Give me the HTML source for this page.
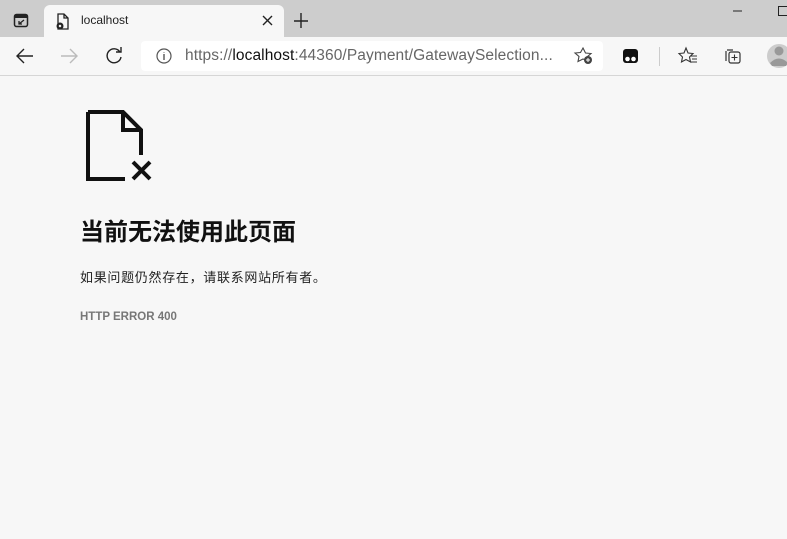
<!DOCTYPE html>
<html><head><meta charset="utf-8"><style>
*{margin:0;padding:0;box-sizing:border-box}
body{width:787px;height:539px;overflow:hidden;background:#f7f7f7;font-family:"Liberation Sans","Noto Sans CJK SC",sans-serif;position:relative}
.abs{position:absolute}
</style></head><body>
<div class="abs" style="left:0;top:0;width:787px;height:37px;background:#cdcdcd"></div>
<div class="abs" style="left:44px;top:5px;width:240px;height:33px;background:#f7f7f7;border-radius:6px 6px 0 0"></div>
<svg class="abs" style="left:0;top:0" width="787" height="76">
 <rect x="14.5" y="14.5" width="13" height="12" rx="2" fill="none" stroke="#222" stroke-width="1.5"/>
 <rect x="15" y="15" width="12" height="3" fill="#222"/>
 <path d="M24 20 L19 24 M19 21 V24 H22" stroke="#222" stroke-width="1.3" fill="none"/>
 <path d="M58 14 H64 L68 18 V29 H58 Z M64 14 V18 H68" stroke="#222" stroke-width="1.3" fill="none"/>
 <circle cx="60" cy="26" r="3.5" fill="#222"/>
 <path d="M59 25 L61 27 M61 25 L59 27" stroke="#fff" stroke-width="1"/>
 <path d="M263 16 L272 25 M272 16 L263 25" stroke="#222" stroke-width="1.4"/>
 <path d="M301 13 V28 M294 21 H308" stroke="#222" stroke-width="1.4"/>
 <path d="M733 11 H742" stroke="#222" stroke-width="1"/>
 <rect x="778.5" y="6.5" width="9" height="9" fill="none" stroke="#222"/>
 <path d="M33 56 H17 M24 49 L17 56 L24 63" stroke="#222" stroke-width="1.4" fill="none"/>
 <path d="M61 56 H77 M70 49 L77 56 L70 63" stroke="#bbb" stroke-width="1.4" fill="none"/>
 <path d="M120 52 A7 7 0 1 0 121 57 M121 47 V52 H116" stroke="#222" stroke-width="1.4" fill="none"/>
 <rect x="141" y="41" width="462" height="30" rx="4" fill="#fff"/>
 <circle cx="164" cy="56" r="7" fill="none" stroke="#555" stroke-width="1.2"/>
 <path d="M164 54 V60 M164 52 V52.5" stroke="#555" stroke-width="1.4"/>
 <path d="M583 48 L585.5 53 L591 53.5 L587 57 L588 61 L583 59 L578 61.5 L579 56.5 L575 53 L580.5 52.5 Z" fill="none" stroke="#444" stroke-width="1.1"/>
 <circle cx="588" cy="60" r="4" fill="#444"/><path d="M588 58 V62 M586 60 H590" stroke="#fff"/>
 <rect x="623" y="49" width="15" height="14" rx="3" fill="#111"/>
 <circle cx="627.5" cy="59" r="2.3" fill="#fff"/><circle cx="633.5" cy="59" r="2.3" fill="#fff"/>
 <path d="M659.5 47 V66" stroke="#ccc"/>
 <path d="M686 48 L688 53 L693 53.5 L689.5 57 L690.5 62 L686 59.5 L681.5 62 L682.5 57 L679 53.5 L684 53 Z" fill="none" stroke="#333" stroke-width="1.1"/>
 <path d="M691 56 H697 M692 59 H697 M691 62 H697" stroke="#333" stroke-width="1.1"/>
 <path d="M727 50 H733 M726 51 V61" stroke="#333" stroke-width="1.2" fill="none"/>
 <rect x="729" y="52" width="11" height="11" rx="2" fill="none" stroke="#333" stroke-width="1.2"/>
 <path d="M734.5 54.5 V60.5 M731.5 57.5 H737.5" stroke="#333" stroke-width="1.1"/>
 <circle cx="779" cy="56" r="12" fill="#ccc"/><circle cx="779" cy="51" r="4.5" fill="#999"/><path d="M770 63 Q779 54 788 63 L786 66 H772 Z" fill="#999"/>
 <path d="M0 75.5 H787" stroke="#d6d6d6"/>
</svg>
<div class="abs" style="left:81px;top:13px;font-size:12px;color:#222">localhost</div>
<div class="abs" style="left:185px;top:47px;font-size:15.5px;color:#666;letter-spacing:0.1px">https://<span style="color:#111">localhost</span>:44360/Payment/GatewaySelection...</div>
<svg class="abs" style="left:80px;top:105px" width="80" height="82">
 <path d="M8 7 H43 L61 25 V50 M45 74 H8 V7 M43 7 V25 H61" stroke="#111" stroke-width="4" fill="none" stroke-linejoin="miter"/>
 <path d="M53 57 L70 74 M70 57 L53 74" stroke="#111" stroke-width="4"/>
</svg>
<div class="abs" style="left:80px;top:218px;font-size:24px;font-weight:bold;color:#111;line-height:30px">当前无法使用此页面</div>
<div class="abs" style="left:80px;top:267px;font-size:13px;letter-spacing:0.7px;color:#222">如果问题仍然存在，请联系网站所有者。</div>
<div class="abs" style="left:80px;top:311px;font-size:11.5px;font-weight:bold;color:#777">HTTP ERROR 400</div>
</body></html>
